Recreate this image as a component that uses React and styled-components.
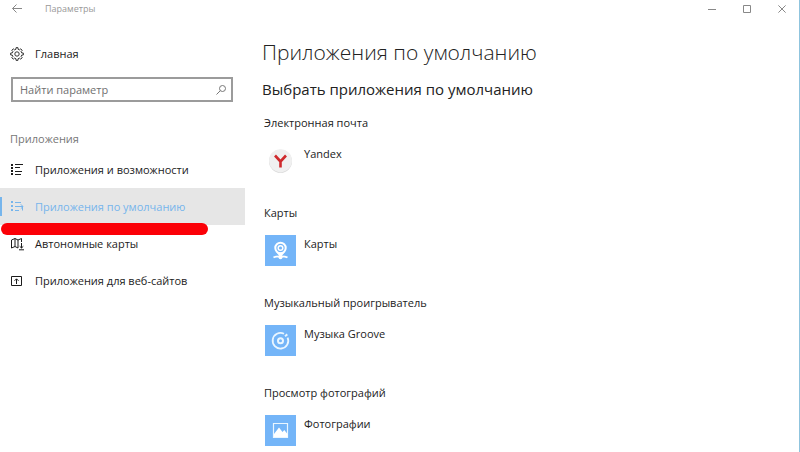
import React, { useState } from "react";
import styled, { createGlobalStyle } from "styled-components";

const GlobalStyle = createGlobalStyle`
  * {
    box-sizing: border-box;
  }
  body {
    margin: 0;
    background: #fff;
    color: #222;
    font: 400 11px/18px "Open Sans", "Noto Sans", sans-serif;
  }
  button,
  input {
    font: inherit;
    color: inherit;
  }
`;

const Window = styled.div`
  display: flex;
  flex-direction: column;
  min-height: 100vh;
  border-right: 1px solid #8fc4de;
`;

const TitleBar = styled.header`
  display: flex;
  align-items: center;
  height: 18px;
  padding: 0 10px;
`;

const WindowTitle = styled.span`
  flex: 1;
  margin-left: 21px;
  color: #999;
  font-size: 9px;
`;

const IconButton = styled.button`
  display: flex;
  justify-content: center;
  align-items: center;
  width: 14px;
  height: 18px;
  padding: 0;
  border: 0;
  background: none;
  color: #888;
`;

const WindowButtons = styled.div`
  display: flex;
  gap: 21px;
`;

const Body = styled.div`
  display: flex;
  flex: 1;
`;

const Sidebar = styled.nav`
  flex: none;
  width: 245px;
  padding-top: 17px;
`;

const NavItem = styled.a`
  position: relative;
  display: flex;
  align-items: center;
  gap: 11px;
  height: 37px;
  padding-left: 10px;
  color: ${(props) => (props.$active ? "#76b5ec" : "#1c1c1c")};
  background: ${(props) => (props.$active ? "#e6e6e6" : "transparent")};
  text-decoration: none;

  &::before {
    content: "";
    position: absolute;
    left: 0;
    width: 2px;
    height: 19px;
    background: ${(props) => (props.$active ? "#76b5ec" : "transparent")};
  }
`;

const Marker = styled.span`
  position: absolute;
  z-index: 1;
  top: 35px;
  left: 1px;
  width: 207px;
  height: 12px;
  border-radius: 6px;
  background: #fb0007;
`;

const SearchBox = styled.label`
  display: flex;
  align-items: center;
  height: 25px;
  margin: 5px 12px 28px 11px;
  padding: 0 4px 0 7px;
  border: 2px solid #9b9b9b;
  color: #777;
`;

const SearchInput = styled.input`
  flex: 1;
  min-width: 0;
  padding: 0;
  border: 0;
  outline: 0;
  background: none;

  &::placeholder {
    color: #707070;
    opacity: 1;
  }
`;

const SectionName = styled.h2`
  margin: 0 0 3px 10px;
  color: #777;
  font-size: 11px;
  font-weight: 400;
  line-height: 18px;
`;

const Content = styled.main`
  flex: 1;
  min-width: 0;
  padding: 19px 17px 0;
`;

const PageTitle = styled.h1`
  margin: 0;
  font-size: 21px;
  font-weight: 300;
  line-height: 30px;
`;

const PageSubtitle = styled.h2`
  margin: 11px 0 14px;
  font-size: 15px;
  font-weight: 400;
  line-height: 22px;
`;

const Group = styled.section`
  display: flex;
  flex-direction: column;
  align-items: flex-start;
  gap: 13px;

  & + & {
    margin-top: 28px;
  }
`;

const GroupName = styled.h3`
  margin: 0 0 0 2px;
  font-size: 11px;
  font-weight: 400;
  line-height: 18px;
`;

const AppButton = styled.button`
  display: flex;
  align-items: flex-start;
  gap: 8px;
  margin-left: 3px;
  padding: 0;
  border: 0;
  background: none;
  line-height: 18px;
`;

const Tile = styled.span`
  display: flex;
  width: 31px;
  height: 31px;
  background: ${(props) => props.$color};
`;

const Svg = ({ size = 14, children, ...rest }) => (
  <svg
    width={size}
    height={size}
    viewBox={`0 0 ${size} ${size}`}
    fill="none"
    stroke="currentColor"
    aria-hidden="true"
    {...rest}
  >
    {children}
  </svg>
);

const BackIcon = () => (
  <Svg size={12}>
    <path d="M11 5.5H1.5M5.5 1.5l-4 4 4 4" />
  </Svg>
);

const MinimizeIcon = () => (
  <Svg size={8}>
    <path d="M0 4.5h8" />
  </Svg>
);

const MaximizeIcon = () => (
  <Svg size={8}>
    <path d="M.5.5h7v7h-7z" />
  </Svg>
);

const CloseIcon = () => (
  <Svg size={8}>
    <path d="M.4.4l7.2 7.2M7.6.4L.4 7.6" />
  </Svg>
);

const GearIcon = () => (
  <Svg strokeWidth="0.9">
    <path d="M5.9 2.3L6 .7h2l.1 1.6 1.4.6 1.2-1.1 1.5 1.5-1.1 1.2.6 1.4 1.6.1v2l-1.6.1-.6 1.4 1.1 1.2-1.5 1.5-1.2-1.1-1.4.6L8 13.3H6l-.1-1.6-1.4-.6-1.2 1.1-1.5-1.5 1.1-1.2-.6-1.4L.7 8V6l1.6-.1.6-1.4-1.1-1.2 1.5-1.5 1.2 1.1z" />
    <circle cx="7" cy="7" r="2.2" />
  </Svg>
);

const SearchIcon = () => (
  <Svg size={12}>
    <circle cx="7.5" cy="4.5" r="3" />
    <path d="M5.3 6.7L1.5 10.5" />
  </Svg>
);

const AppsIcon = () => (
  <Svg>
    <path d="M2 1v11" strokeWidth="2" strokeDasharray="2 1" />
    <path d="M5 1.5h8M5 4.5h5M5 8.5h7M5 11.5h6" />
  </Svg>
);

const DefaultsIcon = () => (
  <Svg>
    <path d="M2 1v11" strokeWidth="2" strokeDasharray="2 2" />
    <path d="M5 2.5h6M5 6.5h8M5 10.5h4M10.8 4.3L13 6.5l-2.2 2.2M12.5 7v3.5" />
  </Svg>
);

const MapIcon = () => (
  <Svg>
    <path d="M8 11L5 9.5 1.5 11V3L5 1.5 8 3l3.5-1.5V5M5 1.5v8M8 3v8" />
    <path d="M11.5 6v5M9.7 9.3l1.8 1.7 1.8-1.7M9 12.8h5" />
  </Svg>
);

const SitesIcon = () => (
  <Svg>
    <path d="M1.5 2.5h10v9h-10zM6.5 10V5M4.5 6.8l2-2 2 2" />
  </Svg>
);

const YandexIcon = () => (
  <Svg size={31}>
    <circle cx="15.5" cy="16.3" r="11.5" fill="#d6d6d6" stroke="none" />
    <circle cx="15.5" cy="15.7" r="11.5" fill="#f0f0f0" stroke="none" />
    <path d="M10 10.5l5.5 6L21 10.5M15.5 16v6.5" stroke="#cf2a2d" strokeWidth="2.6" />
  </Svg>
);

const MapsAppIcon = () => (
  <Svg size={31} stroke="#fff">
    <circle cx="15.5" cy="13" r="5.2" strokeWidth="2" />
    <circle cx="15.5" cy="13" r="2.3" strokeWidth="1.5" />
    <path d="M11.5 17.5h8l-4 5z" fill="#fff" stroke="none" />
    <path d="M8.5 22.5c2.5-1.6 11.5-1.6 14 0" strokeWidth="1.8" />
    <circle cx="15.5" cy="22.3" r="2" fill="#fff" stroke="none" />
  </Svg>
);

const GrooveIcon = () => (
  <Svg size={31} stroke="#eaf6ff">
    <path d="M19 8.8a7.8 7.8 0 1 0 3.6 3.8" strokeWidth="1.8" />
    <path d="M20 11.2l2.3-1.8" strokeWidth="2" />
    <circle cx="15.5" cy="15.7" r="2.5" strokeWidth="2" />
  </Svg>
);

const PhotosIcon = () => (
  <Svg size={31} stroke="#eaf6ff">
    <path d="M8.5 8.5h14v14h-14z" strokeWidth="1.2" />
    <path d="M9 22v-3l5-6.5 3.5 4.5 1.8-2L22.5 19v3z" fill="#fff" stroke="none" />
  </Svg>
);

const sections = [
  { id: "apps", title: "Приложения и возможности", icon: AppsIcon },
  { id: "defaults", title: "Приложения по умолчанию", icon: DefaultsIcon, marked: true },
  { id: "maps", title: "Автономные карты", icon: MapIcon },
  { id: "sites", title: "Приложения для веб-сайтов", icon: SitesIcon },
];

const defaults = [
  { group: "Электронная почта", app: "Yandex", icon: YandexIcon, color: "transparent" },
  { group: "Карты", app: "Карты", icon: MapsAppIcon, color: "#74b5f8" },
  { group: "Музыкальный проигрыватель", app: "Музыка Groove", icon: GrooveIcon, color: "#74b5f8" },
  { group: "Просмотр фотографий", app: "Фотографии", icon: PhotosIcon, color: "#74b5f8" },
];

const App = function App() {
  const [active, setActive] = useState("defaults");
  const [query, setQuery] = useState("");

  return (
    <Window>
      <GlobalStyle />
      <TitleBar>
        <IconButton aria-label="Назад">
          <BackIcon />
        </IconButton>
        <WindowTitle>Параметры</WindowTitle>
        <WindowButtons>
          <IconButton aria-label="Свернуть">
            <MinimizeIcon />
          </IconButton>
          <IconButton aria-label="Развернуть">
            <MaximizeIcon />
          </IconButton>
          <IconButton aria-label="Закрыть">
            <CloseIcon />
          </IconButton>
        </WindowButtons>
      </TitleBar>
      <Body>
        <Sidebar>
          <NavItem href="#home">
            <GearIcon />
            Главная
          </NavItem>
          <SearchBox>
            <SearchInput
              type="text"
              placeholder="Найти параметр"
              aria-label="Найти параметр"
              value={query}
              onChange={(e) => setQuery(e.target.value)}
            />
            <SearchIcon />
          </SearchBox>
          <SectionName>Приложения</SectionName>
          {sections.map(({ id, title, icon: Icon, marked }) => (
            <NavItem
              key={id}
              href={`#${id}`}
              $active={id === active}
              onClick={() => setActive(id)}
            >
              <Icon />
              {title}
              {marked && <Marker />}
            </NavItem>
          ))}
        </Sidebar>
        <Content>
          <PageTitle>Приложения по умолчанию</PageTitle>
          <PageSubtitle>Выбрать приложения по умолчанию</PageSubtitle>
          {defaults.map(({ group, app, icon: Icon, color }) => (
            <Group key={group}>
              <GroupName>{group}</GroupName>
              <AppButton>
                <Tile $color={color}>
                  <Icon />
                </Tile>
                {app}
              </AppButton>
            </Group>
          ))}
        </Content>
      </Body>
    </Window>
  );
};

export default App;
